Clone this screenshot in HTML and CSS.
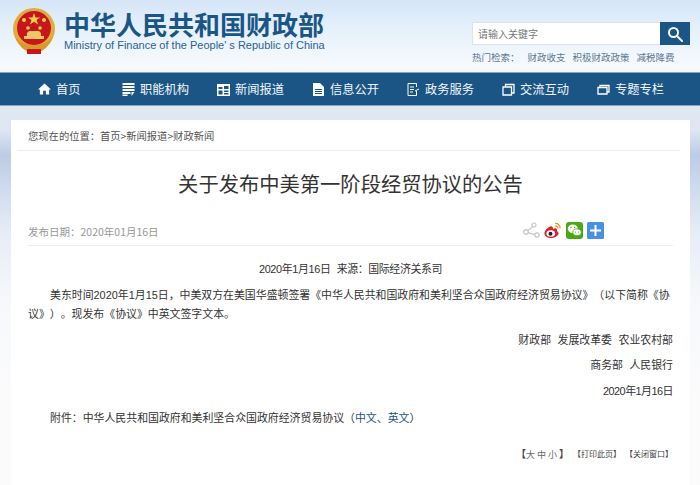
FILE: index.html
```html
<!DOCTYPE html>
<html lang="zh-CN">
<head>
    <meta charset="UTF-8">
    <meta name="viewport" content="width=device-width, initial-scale=1.0">
    <title>关于发布中美第一阶段经贸协议的公告</title>
    <link rel="stylesheet" href="styles.css">
</head>
<body>

<header class="top">
    <div class="brand">
        <svg class="emblem" width="44" height="48" viewBox="0 0 44 48">
            <circle cx="22" cy="22" r="21" fill="#e0ad3c"/>
            <circle cx="22" cy="21" r="17" fill="#c8161d"/>
            <path d="M3 30 Q8 44 22 47 Q36 44 41 30 Q34 38 22 38 Q10 38 3 30Z" fill="#d99a2b"/>
            <path d="M15 42h14v5H15z" fill="#c8161d"/>
            <polygon points="22,6 23.5,10.5 28,10.5 24.5,13 26,17.500 22,14.800 18,17.500 19.500,13 16,10.500 20.500,10.500" fill="#f3cf4e"/>
            <circle cx="12" cy="13" r="2" fill="#f3cf4e"/>
            <circle cx="32" cy="13" r="2" fill="#f3cf4e"/>
            <circle cx="16" cy="21" r="1.800" fill="#f3cf4e"/>
            <circle cx="28" cy="21" r="1.800" fill="#f3cf4e"/>
            <path d="M12 32h20v-3h-3v-3l-2-2H17l-2 2v3h-3z" fill="#ecc868"/>
        </svg>
        <div class="brand-text">
            <div class="brand-cn">中华人民共和国财政部</div>
            <div class="brand-en">Ministry of Finance of the People' s Republic of China</div>
        </div>
    </div>
    <div class="search-block">
        <div class="search-box">
            <div class="search-input">请输入关键字</div>
            <div class="search-btn">
                <svg width="16" height="16" viewBox="0 0 16 16" fill="none" stroke="#fff" stroke-width="2">
                    <circle cx="6.500" cy="6.500" r="4.500"/>
                    <path d="M10 10l5 5" stroke-linecap="round"/>
                </svg>
            </div>
        </div>
        <div class="hot">
            <span class="hot-label">热门检索：</span>
            <span>财政收支</span>
            <span>积极财政政策</span>
            <span>减税降费</span>
        </div>
    </div>
</header>

<nav class="nav">
    <a class="nav-item nav-home"><svg width="14" height="14" viewBox="0 0 14 14" fill="#fff"><path d="M7 1L0 7.500h2V13h3.500V9h3v4H12V7.500h2z"/></svg>首页</a>
    <a class="nav-item"><svg width="12" height="13" viewBox="0 0 12 13" fill="#fff"><path d="M0 0h12v2H0zM0 3h12v2H0zM0 6h12v2H0zM0 9h8v2H0zM0 11.500h5V13H0zM9 9h3l-3 4z"/></svg>职能机构</a>
    <a class="nav-item"><svg width="13" height="13" viewBox="0 0 13 13" fill="#fff"><path d="M0 1h13v12H0zM1.500 4v2h4V4zM7 3v3h4.500V3zM1.500 7.500v4h4v-4zM7 7.500v1.500h4.500V7.500zM7 10v1.500h4.500V10z" fill-rule="evenodd"/></svg>新闻报道</a>
    <a class="nav-item"><svg width="11" height="13" viewBox="0 0 11 13" fill="#fff"><path d="M0 0h7l4 4v9H0zM2 6v1h7V6zM2 8v1h7V8zM2 10v1h7v-1z" fill-rule="evenodd"/></svg>信息公开</a>
    <a class="nav-item"><svg width="13" height="13" viewBox="0 0 13 13" fill="none" stroke="#fff"><path d="M9.500 8v4.500h-8.500V.5h8.500V4M3 4h4M3 6.500h4M3 9h3M8 8l4-2"/></svg>政务服务</a>
    <a class="nav-item"><svg width="13" height="13" viewBox="0 0 13 13" fill="none" stroke="#fff" stroke-width="1.300"><path d="M1 4h8.500v8H1zM3.500 4V1.500H12V10H9.500"/></svg>交流互动</a>
    <a class="nav-item"><svg width="13" height="11" viewBox="0 0 13 11" fill="none" stroke="#fff" stroke-width="1.300"><path d="M1 3.500h9v6.500H1zM3 3.500V1.500h9V8h-2"/></svg>专题专栏</a>
</nav>

<main class="card">
    <div class="crumb">您现在的位置： 首页&gt;新闻报道&gt;财政新闻</div>
    <h1 class="title">关于发布中美第一阶段经贸协议的公告</h1>
    <div class="meta">
        <span>发布日期：2020年01月16日</span>
        <div class="share">
            <svg width="17" height="17" viewBox="0 0 17 17" fill="none" stroke="#c4c4c4" stroke-width="1.200">
                <circle cx="11" cy="3" r="2"/><circle cx="3" cy="10" r="2.300"/><circle cx="14" cy="13" r="2.200"/>
                <path d="M9.800 4.600L4.700 8.600M5.200 10.700L11.900 12.600"/>
            </svg>
            <svg width="18" height="17" viewBox="0 0 18 17">
                <path d="M7.500 4C3.500 5 0 9 .5 12c.5 3 4 4.500 7.500 4 4-.5 7-3 6.500-5-.3-1.300-1.500-1.600-1.500-2 .5-2-.5-3-2.500-2.500l-1.500.5c0-2-1-3-2.500-2.500z" fill="#e0212c"/>
                <ellipse cx="6.800" cy="11.500" rx="4.300" ry="3.300" fill="#fff"/>
                <circle cx="6.500" cy="11.700" r="2" fill="#222"/>
                <path d="M11 1.500c3-.5 5.500 2 5 5M11.300 4c1.500-.2 2.800 1 2.500 2.500" fill="none" stroke="#eb9a1e" stroke-width="1.300"/>
            </svg>
            <svg width="17" height="17" viewBox="0 0 17 17">
                <rect width="17" height="17" rx="3" fill="#4aa913"/>
                <ellipse cx="6.800" cy="6.800" rx="5" ry="4.200" fill="#fff"/>
                <ellipse cx="11" cy="10.300" rx="4.200" ry="3.400" fill="#fff" stroke="#4aa913" stroke-width=".8"/>
                <circle cx="5" cy="5.500" r=".7" fill="#4aa913"/><circle cx="8.500" cy="5.500" r=".7" fill="#4aa913"/>
                <circle cx="9.500" cy="10" r=".6" fill="#4aa913"/><circle cx="12.500" cy="10" r=".6" fill="#4aa913"/>
            </svg>
            <svg width="17" height="17" viewBox="0 0 17 17">
                <rect width="17" height="17" rx="1.500" fill="#4a90e2"/>
                <path d="M7.500 3h2v4.500H14v2H9.500V14h-2V9.500H3v-2h4.500z" fill="#fff"/>
            </svg>
        </div>
    </div>
    <div class="article">
        <p class="center">2020年1月16日 来源：国际经济关系司</p>
        <p class="indent para-first">美东时间2020年1月15日，中美双方在美国华盛顿签署《中华人民共和国政府和美利坚合众国政府经济贸易协议》（以下简称《协议》）。现发布《协议》中英文签字文本。</p>
        <p class="right">财政部 发展改革委 农业农村部</p>
        <p class="right">商务部 人民银行</p>
        <p class="right date">2020年1月16日</p>
        <p class="indent attach">附件：中华人民共和国政府和美利坚合众国政府经济贸易协议（<a>中文</a>、<a>英文</a>）</p>
    </div>
    <div class="tools">
        <span class="size"><b>【</b><span class="size-opts">大中小</span><b>】</b></span>
        <span>【打印此页】</span>
        <span>【关闭窗口】</span>
    </div>
</main>

</body>
</html>
```

FILE: styles.css
```css
* {
    box-sizing: border-box;
}

body {
    margin: 0;
    height: 485px;
    overflow: hidden;
    font-family: "Noto Sans CJK SC", "Liberation Sans", sans-serif;
    font-size: 10.500px;
    color: #333;
    text-spacing-trim: space-all;
    background: linear-gradient(180deg, #d5e5f7 0, #e6f1fb 30px, #f6f9fd 65px, #dfe8f3 110px, #dde6f2 130px, #bccce6 155px, #e6ecf6 230px, #f6f8fb 300px, #fbfbfc 400px);
}

/* Header */
.top {
    height: 72px;
    display: flex;
    justify-content: space-between;
    padding: 7px 10px 0 12px;
}

.brand {
    display: flex;
    gap: 8px;
    align-items: flex-start;
}

.brand-text {
    padding-top: 2px;
}

.brand-cn {
    font-size: 26px;
    line-height: 29px;
    font-weight: 700;
    color: #1a5585;
}

.brand-en {
    font-family: "Liberation Sans", sans-serif;
    font-size: 11px;
    line-height: 14px;
    color: #2b6290;
    white-space: nowrap;
}

.search-block {
    width: 218px;
    padding-top: 15px;
}

.search-box {
    display: flex;
    height: 23px;
    border: 1px solid #dde3ea;
    background: #fff;
}

.search-input {
    flex: 1;
    padding-left: 5px;
    line-height: 21px;
    font-size: 10px;
    color: #777;
}

.search-btn {
    width: 30px;
    margin: -1px -1px -1px 0;
    background: #1a5585;
    display: flex;
    align-items: center;
    justify-content: center;
}

.hot {
    display: flex;
    margin-top: 5px;
    font-size: 9.500px;
    line-height: 15px;
    color: #5c7891;
    gap: 7px;
    white-space: nowrap;
}

.hot-label {
    margin-right: 1px;
}

/* Nav */
.nav {
    height: 34px;
    background: #1a5585;
    border-top: 1px solid #7fa6c4;
    border-bottom: 1px solid #7fa6c4;
    display: flex;
    padding-left: 38px;
}

.nav-item {
    width: 95px;
    display: flex;
    align-items: center;
    gap: 5px;
    font-size: 12.250px;
    color: #f2f6fa;
    white-space: nowrap;
}

.nav-item svg {
    width: 13px;
}

.nav-home {
    width: 84px;
}

/* Card */
.card {
    margin: 14px 10px 0 11px;
    padding: 0 17px;
    background: #fff;
    height: 365px;
}

.crumb {
    height: 31px;
    margin: 0 -7px 0 -11px;
    padding: 0 0 0 11px;
    font-size: 10.300px;
    word-spacing: -2.500px;
    line-height: 32px;
    color: #555;
    border-bottom: 1px solid #eee;
}

.title {
    margin: 0;
    height: 64px;
    padding-top: 15px;
    text-align: center;
    font-size: 20.300px;
    line-height: 34px;
    font-weight: 400;
    color: #333;
}

.meta {
    height: 31px;
    display: flex;
    justify-content: space-between;
    border-bottom: 1px solid #eee;
    color: #999;
    line-height: 34px;
}

.share {
    display: flex;
    gap: 4px;
    padding: 7px 69px 0 0;
    align-items: flex-start;
}

.article {
    padding-top: 14px;
    font-family: "Liberation Sans", "Noto Sans CJK SC", sans-serif;
    font-size: 10.900px;
    word-spacing: 3.500px;
    color: #333;
}

.article p {
    margin: 0 0 6.300px;
    line-height: 19px;
}

.article .center {
    text-align: center;
    letter-spacing: -0.350px;
    margin-bottom: 7px;
}

.article .indent {
    text-indent: 22px;
}

.article .para-first {
    margin-bottom: 7px;
}

.article .right {
    text-align: right;
}

.article .date {
    letter-spacing: -0.500px;
}

.article .attach {
    padding-top: 2px;
}

.article a {
    color: #1a5585;
}

.tools {
    display: flex;
    justify-content: flex-end;
    align-items: center;
    gap: 4px;
    margin-top: 18px;
    font-size: 8px;
    color: #444;
}

.size {
    font-size: 9px;
}

.size b {
    font-size: 10px;
}

.size-opts {
    letter-spacing: 2px;
    color: #666;
}
```
